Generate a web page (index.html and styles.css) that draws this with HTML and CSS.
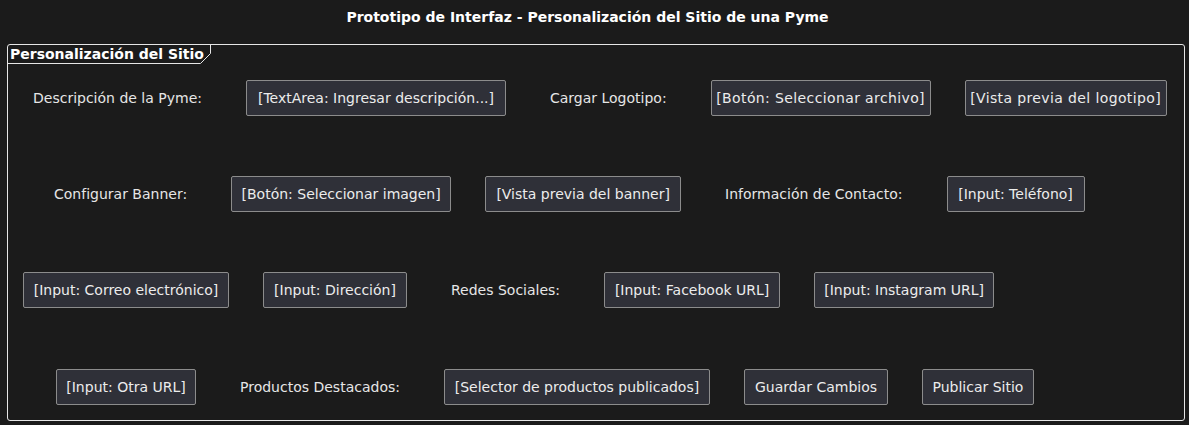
FILE: index.html
```html
<!DOCTYPE html>
<html lang="es">
<head>
<meta charset="utf-8">
<title>Prototipo de Interfaz</title>
<link rel="stylesheet" href="styles.css">
</head>
<body>
<h1 class="title">Prototipo de Interfaz - Personalización del Sitio de una Pyme</h1>
<section class="frame">
  <div class="tab">
    <span class="tab-label">Personalización del Sitio</span>
    <svg class="tab-line" width="210" height="22" viewBox="0 0 210 22"><path d="M0 18.5 H192.5 L202.5 8.5 V0" fill="none" stroke="#e6e6e6" stroke-width="1"/></svg>
  </div>
  <div class="rows">
    <div class="row row-1">
      <span class="label">Descripción de la Pyme:</span>
      <span class="btn w-260">[TextArea: Ingresar descripción...]</span>
      <span class="label">Cargar Logotipo:</span>
      <span class="btn w-220 wide">[Botón: Seleccionar archivo]</span>
      <span class="btn w-202 wide">[Vista previa del logotipo]</span>
    </div>
    <div class="row row-2">
      <span class="label">Configurar Banner:</span>
      <span class="btn w-220">[Botón: Seleccionar imagen]</span>
      <span class="btn w-196">[Vista previa del banner]</span>
      <span class="label">Información de Contacto:</span>
      <span class="btn w-138">[Input: Teléfono]</span>
    </div>
    <div class="row row-3">
      <span class="btn w-206">[Input: Correo electrónico]</span>
      <span class="btn w-144">[Input: Dirección]</span>
      <span class="label">Redes Sociales:</span>
      <span class="btn w-176">[Input: Facebook URL]</span>
      <span class="btn w-180">[Input: Instagram URL]</span>
    </div>
    <div class="row row-4">
      <span class="btn w-140">[Input: Otra URL]</span>
      <span class="label">Productos Destacados:</span>
      <span class="btn w-266">[Selector de productos publicados]</span>
      <span class="btn w-144">Guardar Cambios</span>
      <span class="btn w-112">Publicar Sitio</span>
    </div>
  </div>
</section>
</body>
</html>
```
FILE: styles.css
```css
html, body {
  margin: 0;
  padding: 0;
  background: #1b1b1b;
}
body {
  width: 1189px;
  height: 425px;
  overflow: hidden;
  font-family: "DejaVu Sans", "Liberation Sans", sans-serif;
  font-size: 14px;
  color: #e8e8e8;
}
.title {
  width: 1175px;
  margin: 9px 0 0 0;
  height: 17px;
  line-height: 17px;
  font-size: 14px;
  font-weight: bold;
  text-align: center;
  color: #ffffff;
}
.frame {
  position: relative;
  box-sizing: border-box;
  margin: 18px 0 0 7px;
  width: 1178px;
  height: 377px;
  border: 1px solid #e6e6e6;
  border-radius: 3px;
}
.tab {
  position: absolute;
  left: 0;
  top: 0;
  width: 210px;
  height: 22px;
}
.tab-label {
  position: absolute;
  left: 2px;
  top: 1px;
  line-height: 17px;
  font-weight: bold;
  color: #ffffff;
  white-space: nowrap;
}
.tab-line {
  position: absolute;
  left: 0;
  top: 0;
  overflow: visible;
}
.rows {
  display: flex;
  flex-direction: column;
  gap: 60px;
  padding-top: 35px;
}
.row {
  display: flex;
  align-items: center;
  gap: 34px;
  height: 36px;
}
.row-4 { margin-top: 1px; }
.row-1 { padding-left: 15px; }
.row-2 { padding-left: 36px; }
.row-3 { padding-left: 15px; }
.row-4 { padding-left: 48px; }
.label {
  padding: 0 10px;
  white-space: nowrap;
  color: #e6e6e6;
}
.btn {
  box-sizing: border-box;
  flex: none;
  height: 36px;
  display: flex;
  align-items: center;
  justify-content: center;
  padding: 0;
  white-space: nowrap;
  background: #2f3038;
  border: 1px solid #8c8c8c;
  border-radius: 2px;
  color: #ececec;
}
.btn.wide { letter-spacing: 0.38px; }
.w-112 { width: 112px; }
.w-138 { width: 138px; }
.w-140 { width: 140px; }
.w-144 { width: 144px; }
.w-176 { width: 176px; }
.w-180 { width: 180px; }
.w-196 { width: 196px; }
.w-202 { width: 202px; }
.w-206 { width: 206px; }
.w-220 { width: 220px; }
.w-260 { width: 260px; }
.w-266 { width: 266px; }
```
